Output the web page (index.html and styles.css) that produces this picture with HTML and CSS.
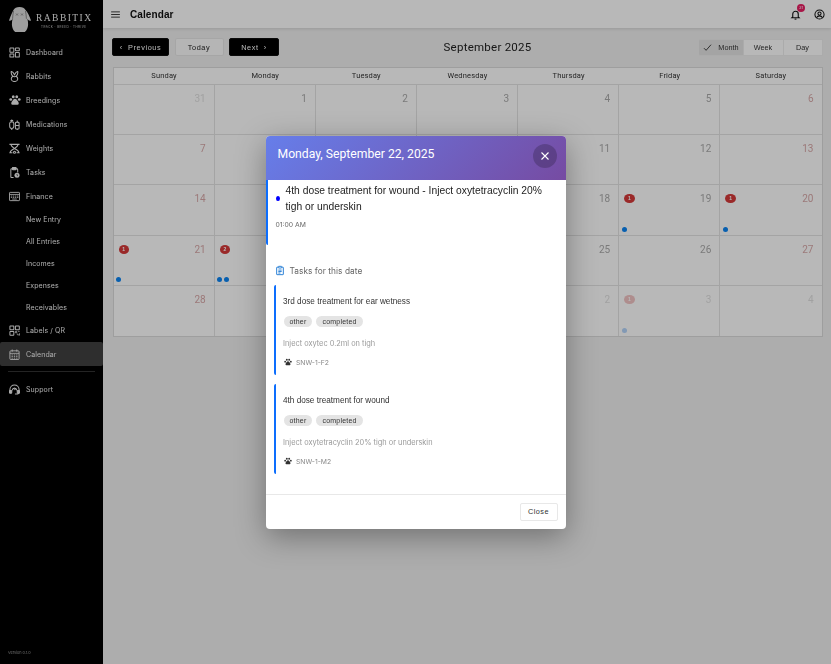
FILE: index.html
```html
<!DOCTYPE html>
<html lang="en">
<head>
<meta charset="utf-8">
<title>Calendar</title>
<link rel="stylesheet" href="styles.css">
</head>
<body>
<svg class="defs" width="0" height="0" aria-hidden="true">
  <defs>
    <symbol id="paw" viewBox="0 0 24 24"><g fill="currentColor"><ellipse cx="3.500" cy="11" rx="2.800" ry="2.600"/><ellipse cx="8.500" cy="5.500" rx="2.800" ry="3"/><ellipse cx="15.500" cy="5.500" rx="2.800" ry="3"/><ellipse cx="20.500" cy="11" rx="2.800" ry="2.600"/><path d="M12 9.500c-3 0-4.500 3-6.500 6C4 18 4 21.500 7 21.500h10c3 0 3-3.500 1.500-6-2-3-3.500-6-6.500-6z"/></g></symbol>
  </defs>
</svg>
<div class="app">
  <aside class="sidebar">
    <div class="logo">
      <svg class="logo-mark" viewBox="0 0 23 26"><path fill="#dcdcdc" d="M11.500 0c3 0 5 1.200 6 3 2 2 4 6 5.500 10.500-1.300.8-2.700-.2-3.600-1.700.5 2 .8 4 .7 6-.2 3.200-1.400 5.800-3.300 7.200H7.200C5.300 23.600 4.100 21 3.900 17.800c-.1-2 .2-4 .7-6C3.700 13.300 2.300 14.300 1 13.500 2.500 9 4.500 5 5.500 3 6.500 1.200 8.500 0 11.500 0z"/><path d="M8 6.500l2 2M10 6.500l-2 2M13 6.500l2 2M15 6.500l-2 2" stroke="#666" stroke-width=".6"/><path d="M5.500 4C5 7 4.700 9 4.600 11.800M17.500 4c.5 3 .8 5 .9 7.800" stroke="#333" stroke-width=".5" fill="none"/></svg>
      <div class="logo-text">
        <div class="logo-name">RABBITIX</div>
        <div class="logo-sub">TRACK · BREED · THRIVE</div>
      </div>
    </div>
    <nav class="nav">
      <a class="nav-item"><svg class="nav-icon" viewBox="0 0 24 24" fill="none" stroke="currentColor" stroke-width="2.200"><rect x="2" y="2" width="8.500" height="9.500" rx="1"/><rect x="14" y="2" width="8.500" height="6" rx="1"/><rect x="2" y="15.500" width="8.500" height="6.500" rx="1"/><rect x="14" y="12" width="8.500" height="10" rx="1"/></svg><span>Dashboard</span></a>
      <a class="nav-item"><svg class="nav-icon" viewBox="0 0 24 24" fill="none" stroke="currentColor" stroke-width="2.200"><path d="M5 1c3 .5 5.500 4 7 7 1.500-3 4-6.500 7-7 .8 4-.7 8-3.500 10.500 2.500 1.500 3.800 4 3.500 6.500-.4 3-3.500 5-7 5s-6.600-2-7-5c-.3-2.500 1-5 3.500-6.500C5.700 9 4.200 5 5 1z"/><path d="M8.500 11.500c2 1 5 1 7 0"/></svg><span>Rabbits</span></a>
      <a class="nav-item"><svg class="nav-icon paw-big" viewBox="0 0 24 24"><use href="#paw"/></svg><span>Breedings</span></a>
      <a class="nav-item"><svg class="nav-icon" viewBox="0 0 24 24" fill="none" stroke="currentColor" stroke-width="2.200"><path d="M6 1v5M3 3.500h6M3 6.500h6l1.500 3v6.500a4.500 4.500 0 0 1-9 0V9.500zM6 20.500V24"/><rect x="14" y="7" width="8" height="15" rx="2"/><path d="M18 3v4M18 22v2M14 14h8"/></svg><span>Medications</span></a>
      <a class="nav-item"><svg class="nav-icon" viewBox="0 0 24 24" fill="none" stroke="currentColor" stroke-width="2.200"><path d="M1 3h22M4 3c.5 4 4 6 8 9 4-3 7.500-5 8-9" /><path d="M12 12c-4 2-9 4-10 9.500h5.500M12 12c4 2 9 4 10 9.500h-5.500"/><circle cx="12" cy="20" r="2.200"/></svg><span>Weights</span></a>
      <a class="nav-item"><svg class="nav-icon" viewBox="0 0 24 24" fill="none" stroke="currentColor" stroke-width="2.200"><path d="M10 23H6a2 2 0 0 1-2-2V6a2 2 0 0 1 2-2h11a2 2 0 0 1 2 2v6"/><rect x="7.500" y="1" width="8" height="5" rx="1" fill="currentColor"/><circle cx="17.500" cy="18" r="5.500" fill="currentColor" stroke="none"/><path d="M17.500 15v3.200l2 1.300" stroke="#000" stroke-width="1.400"/></svg><span>Tasks</span></a>
      <a class="nav-item"><svg class="nav-icon" viewBox="0 0 24 24" fill="none" stroke="currentColor" stroke-width="2"><rect x="1" y="3" width="22" height="18" rx="1.500"/><path d="M1 7.500h22M4 11h3M8.500 11h3M13 11h3M17.500 11h3M4 14h3M8.500 14h3M13 14h3M17.500 14h3M7 17.500h10" stroke-width="1.800"/></svg><span>Finance</span></a>
      <a class="nav-sub">New Entry</a>
      <a class="nav-sub">All Entries</a>
      <a class="nav-sub">Incomes</a>
      <a class="nav-sub">Expenses</a>
      <a class="nav-sub">Receivables</a>
      <a class="nav-item"><svg class="nav-icon" viewBox="0 0 24 24" fill="none" stroke="currentColor" stroke-width="2.200"><rect x="2" y="2" width="8.500" height="8.500" rx="1"/><rect x="14" y="2" width="8.500" height="8.500" rx="1"/><rect x="2" y="14" width="8.500" height="8.500" rx="1"/><path d="M14 14h3v3h-3zM20 14h3M17 20h3v3M23 18v5" stroke-width="1.700"/></svg><span>Labels / QR</span></a>
      <a class="nav-item active"><svg class="nav-icon" viewBox="0 0 24 24" fill="none" stroke="currentColor" stroke-width="2"><rect x="2" y="4" width="20" height="19" rx="2"/><path d="M2 9.500h20M7 1v5M17 1v5M5.500 13h3M10.500 13h3M15.500 13h3M5.500 16.500h3M10.500 16.500h3M15.500 16.500h3M5.500 20h3M10.500 20h3M15.500 20h3" stroke-width="1.800"/></svg><span>Calendar</span></a>
      <div class="nav-divider"></div>
      <a class="nav-item"><svg class="nav-icon" viewBox="0 0 24 24" fill="none" stroke="currentColor" stroke-width="2.200"><path d="M2 17v-5a10 10 0 0 1 20 0v5"/><path d="M7 14c.5-3 2.500-5 5-5s4.500 2 5 5M12 13l1.500-2M22 18c0 2.500-2.500 4-6 4h-3"/><rect x="1" y="14" width="5" height="6" rx="1.500" fill="currentColor"/><rect x="18" y="14" width="5" height="6" rx="1.500" fill="currentColor"/></svg><span>Support</span></a>
    </nav>
    <div class="version">Version 0.1.0</div>
  </aside>
  <main class="main">
    <header class="topbar">
      <svg class="hamburger" viewBox="0 0 10 8"><path d="M0 1h10M0 4h10M0 7h10" stroke="#222" stroke-width="1"/></svg>
      <h1 class="page-title">Calendar</h1>
      <div class="top-actions">
        <span class="bell">
          <svg class="top-icon" viewBox="0 0 24 24" fill="none" stroke="#111" stroke-width="2.400"><path d="M6 17V11a6 6 0 0 1 12 0v6l2 2H4z"/><path d="M10 22h4" stroke-width="2.400"/></svg>
          <span class="bell-badge">31</span>
        </span>
        <svg class="top-icon" viewBox="0 0 24 24" fill="none" stroke="#111" stroke-width="2.200"><circle cx="12" cy="12" r="10"/><circle cx="12" cy="10" r="3.500"/><path d="M5.500 19c1.500-3 4-4 6.500-4s5 1 6.500 4"/></svg>
      </div>
    </header>
    <section class="content">
      <div class="toolbar">
        <div class="nav-buttons">
          <button class="btn btn-dark btn-prev">‹&nbsp; Previous</button>
          <button class="btn btn-light">Today</button>
          <button class="btn btn-dark btn-next">Next &nbsp;›</button>
        </div>
        <h2 class="month-title">September 2025</h2>
        <div class="view-group">
          <button class="view view-active"><svg class="check" viewBox="0 0 12 10"><path d="M1 6l3 3 7-8" fill="none" stroke="#222" stroke-width="1.200"/></svg>Month</button>
          <button class="view">Week</button>
          <button class="view view-last">Day</button>
        </div>
      </div>
      <div class="calendar">
        <div class="weekdays">
          <div>Sunday</div><div>Monday</div><div>Tuesday</div><div>Wednesday</div><div>Thursday</div><div>Friday</div><div>Saturday</div>
        </div>
        <div class="days">
          <div class="day other">31</div><div class="day">1</div><div class="day">2</div><div class="day">3</div><div class="day">4</div><div class="day">5</div><div class="day weekend">6</div>
          <div class="day weekend">7</div><div class="day">8</div><div class="day">9</div><div class="day">10</div><div class="day">11</div><div class="day">12</div><div class="day weekend">13</div>
          <div class="day weekend">14</div><div class="day">15</div><div class="day">16</div><div class="day">17</div><div class="day">18</div>
          <div class="day"><span class="badge">1</span>19<div class="dots"><i></i></div></div>
          <div class="day weekend"><span class="badge">1</span>20<div class="dots"><i></i></div></div>
          <div class="day weekend"><span class="badge">1</span>21<div class="dots"><i></i></div></div>
          <div class="day"><span class="badge">2</span>22<div class="dots"><i></i><i></i></div></div>
          <div class="day">23</div><div class="day">24</div><div class="day">25</div><div class="day">26</div><div class="day weekend">27</div>
          <div class="day weekend">28</div><div class="day">29</div><div class="day">30</div><div class="day other">1</div><div class="day other">2</div>
          <div class="day other"><span class="badge">1</span>3<div class="dots"><i></i></div></div>
          <div class="day other">4</div>
        </div>
      </div>
    </section>
  </main>
</div>
<div class="backdrop">
  <div class="modal">
    <div class="modal-head">
      <div class="modal-title">Monday, September 22, 2025</div>
      <button class="modal-x" aria-label="Close"><svg viewBox="0 0 10 10"><path d="M1.500 1.500l7 7M8.500 1.500l-7 7" stroke="#fff" stroke-width="1.100"/></svg></button>
    </div>
    <div class="modal-body">
      <div class="event">
        <div class="event-row"><span class="event-dot"></span><span class="event-text">4th dose treatment for wound - Inject oxytetracyclin 20% tigh or underskin</span></div>
        <div class="event-time">01:00 AM</div>
      </div>
      <div class="tasks-head">
        <svg class="tasks-icon" viewBox="0 0 24 24" fill="none" stroke="#1976d2" stroke-width="2.200"><path d="M8 4H5a1 1 0 0 0-1 1v16a1 1 0 0 0 1 1h14a1 1 0 0 0 1-1V5a1 1 0 0 0-1-1h-3"/><rect x="8" y="2" width="8" height="4" rx="1"/><path d="M8 11h8M8 14.500h8M8 18h5"/></svg>
        <span>Tasks for this date</span>
      </div>
      <div class="task">
        <div class="task-title">3rd dose treatment for ear wetness</div>
        <div class="chips"><span class="chip">other</span><span class="chip">completed</span></div>
        <div class="task-desc">Inject oxytec 0.2ml on tigh</div>
        <div class="task-id"><svg class="paw-small" viewBox="0 0 24 24"><use href="#paw"/></svg>SNW-1-F2</div>
      </div>
      <div class="task">
        <div class="task-title">4th dose treatment for wound</div>
        <div class="chips"><span class="chip">other</span><span class="chip">completed</span></div>
        <div class="task-desc">Inject oxytetracyclin 20% tigh or underskin</div>
        <div class="task-id"><svg class="paw-small" viewBox="0 0 24 24"><use href="#paw"/></svg>SNW-1-M2</div>
      </div>
    </div>
    <div class="modal-foot"><button class="btn-close">Close</button></div>
  </div>
</div>
</body>
</html>
```
FILE: styles.css
```css
* { box-sizing: border-box; }
html, body { margin: 0; height: 100%; overflow: hidden; }
body { font-family: "Inter", "Liberation Sans", sans-serif; background: #f0f0f0; color: #222; }
.defs { position: absolute; }
.app { display: flex; height: 664px; filter: blur(.35px); }

.sidebar { width: 103px; flex: none; background: #000; color: #eee; display: flex; flex-direction: column; position: relative; }
.logo { height: 40px; display: flex; align-items: flex-start; padding: 7px 0 0 8px; gap: 5px; }
.logo-mark { width: 23px; height: 26px; flex: none; }
.logo-text { padding-top: 6px; }
.logo-name { font-family: "Liberation Serif", serif; font-size: 9.500px; letter-spacing: 1.450px; line-height: 11px; color: #eee; white-space: nowrap; }
.logo-sub { font-size: 3px; letter-spacing: .45px; color: #ccc; line-height: 6px; white-space: nowrap; padding-left: 5px; }
.nav { display: flex; flex-direction: column; }
.nav-item { height: 24px; display: flex; align-items: center; padding-left: 9px; gap: 6px; font-size: 7px; color: #eee; letter-spacing: .1px; }
.nav-icon { width: 11px; height: 11px; flex: none; color: #eee; }
.paw-big { width: 12px; height: 12px; margin: 0 -.5px; }
.nav-sub { height: 22px; display: flex; align-items: center; padding-left: 26px; font-size: 7px; color: #eee; letter-spacing: .1px; }
.nav-sub:last-of-type { margin-bottom: 1px; }
.active { background: #404040; border-radius: 2px; }
.nav-divider { height: 1px; background: #333; margin: 5px 8px 5px; }
.version { position: absolute; left: 8px; bottom: 9px; font-size: 3.800px; color: #999; }

.main { flex: 1; min-width: 0; display: flex; flex-direction: column; }
.topbar { height: 28px; flex: none; background: #fff; display: flex; align-items: center; padding: 1px 6px 0 7.500px; box-shadow: 0 1px 3px rgba(0,0,0,.12); }
.hamburger { width: 9px; height: 7px; flex: none; }
.page-title { margin: 0 0 0 10.500px; font-size: 10px; font-weight: 700; color: #111; font-family: "Liberation Sans", sans-serif; letter-spacing: .1px; }
.top-actions { margin-left: auto; display: flex; align-items: center; gap: 13px; }
.top-icon { width: 11px; height: 11px; display: block; }
.bell { position: relative; display: block; }
.bell-badge { position: absolute; left: 7px; top: -5px; width: 8px; height: 8px; border-radius: 50%; background: #e91e63; color: #fff; font-size: 4px; line-height: 8px; text-align: center; }

.content { flex: 1; padding: 10px 8.500px 0 9.500px; }
.toolbar { display: grid; grid-template-columns: 1fr auto 1fr; align-items: center; height: 18px; margin-bottom: 11px; }
.nav-buttons { display: flex; gap: 5.500px; margin-left: -.5px; }
.btn { height: 18px; border-radius: 2px; font-family: "Liberation Sans", sans-serif; font-size: 7.300px; letter-spacing: .6px; padding: 0; font-weight: 400; }
.btn-dark { background: #000; color: #fff; border: 1px solid #111; }
.btn-prev { width: 57px; }
.btn-next { width: 50px; }
.btn-light { background: #fbfbfb; border: 1px solid #e6e6e6; color: #222; width: 49px; }
.month-title { margin: 0; font-size: 11.500px; font-weight: 400; color: #222; letter-spacing: .25px; font-family: "Roboto", sans-serif; position: relative; left: 20px; }
.view-group { display: flex; justify-self: end; height: 17px; }
.view { height: 17px; width: 40px; border: 1px solid #eee; border-left: 0; background: #fff; font-family: "Liberation Sans", sans-serif; font-size: 7.300px; color: #333; padding: 0; display: flex; align-items: center; justify-content: center; }
.view-last { width: 39px; }
.view-active { width: 45px; background: #e4e4e4; border-left: 1px solid #e4e4e4; border-radius: 2px 0 0 2px; gap: 6px; }
.check { width: 9px; height: 7px; }

.calendar { border: 1px solid #dcdcdc; background: #fff; width: 710px; }
.weekdays { display: grid; grid-template-columns: repeat(7, 1fr); height: 16.500px; border-bottom: 1px solid #e4e4e4; }
.weekdays > div { text-align: center; font-size: 7.500px; line-height: 16px; color: #333; font-family: "Roboto", sans-serif; letter-spacing: .15px; }
.days { display: grid; grid-template-columns: repeat(7, 1fr); grid-auto-rows: 50.400px; }
.day { position: relative; border-right: 1px solid #e4e4e4; border-bottom: 1px solid #e4e4e4; padding: 7px 8px 0 0; text-align: right; font-size: 10px; line-height: 13px; color: #aaa; font-family: "Roboto", sans-serif; }
.day:nth-child(7n) { border-right: 0; }
.day:nth-last-child(-n+7) { border-bottom: 0; }
.weekend { color: #d8a8a8; }
.other { color: #e0e0e0; }
.badge { position: absolute; left: 5px; top: 9px; width: 10.500px; height: 9px; border-radius: 50%; background: #d63a3a; color: #fff; font-size: 5px; line-height: 9px; text-align: center; font-weight: 700; font-family: "Liberation Sans", sans-serif; }
.dots { position: absolute; left: 2.500px; bottom: 3px; display: flex; gap: 2px; }
.dots i { display: block; width: 5px; height: 5px; border-radius: 50%; background: #0b84f3; }
.other .badge { background: #f2c4c4; }
.other .dots i { background: #b4d4fa; }

.backdrop { position: fixed; inset: 0; background: rgba(0,0,0,.28); display: flex; align-items: center; justify-content: center; }
.modal { width: 300px; height: 393px; background: #fff; border-radius: 4px; display: flex; flex-direction: column; overflow: hidden; box-shadow: 0 8px 30px rgba(0,0,0,.35); filter: blur(.3px); }
.modal-head { height: 44px; flex: none; background: linear-gradient(135deg, #667eea, #764ba2); display: flex; align-items: flex-start; justify-content: space-between; padding: 8px 8.500px 0 12px; }
.modal-title { color: #fff; font-size: 12.200px; line-height: 20px; font-family: "Roboto", sans-serif; }
.modal-x { width: 24px; height: 24px; border-radius: 50%; border: 0; padding: 7px; background: rgba(0,0,0,.2); }
.modal-x svg { display: block; width: 10px; height: 10px; }
.modal-body { flex: 1; min-height: 0; overflow: hidden; }
.event { border-left: 2px solid #0d6efd; height: 65px; padding: 3px 8px 0 8px; border-radius: 0 0 0 2px; }
.event-row { display: flex; align-items: center; gap: 6px; }
.event-dot { width: 4px; height: 5.500px; border-radius: 50%; background: #00f; flex: none; }
.event-text { font-family: "Liberation Sans", sans-serif; font-size: 10.300px; line-height: 16px; color: #222; }
.event-time { font-size: 6.800px; color: #666; margin-top: 5px; line-height: 9px; }
.tasks-head { display: flex; align-items: center; gap: 5px; margin: 20px 0 8px 9px; height: 12px; font-size: 8.300px; color: #666; letter-spacing: .05px; }
.tasks-icon { width: 10px; height: 11px; flex: none; }
.task { margin: 0 0 9px 8px; width: 284px; height: 90px; border-left: 2px solid #0d6efd; border-radius: 2px; padding: 11.500px 0 0 7.500px; }
.task-title { font-family: "Liberation Sans", sans-serif; font-size: 8.200px; line-height: 12px; color: #333; }
.chips { display: flex; gap: 4px; margin-top: 7.500px; padding-left: .5px; }
.chip { height: 11.500px; border-radius: 6px; background: #e4e4e4; font-family: "Liberation Sans", sans-serif; font-size: 7px; line-height: 11.500px; padding: 0 6px; color: #333; letter-spacing: .2px; }
.task-desc { font-size: 7.400px; color: #999; margin-top: 10.500px; line-height: 11px; }
.task-id { display: flex; align-items: center; font-size: 6.800px; color: #888; margin-top: 8px; line-height: 11px; padding-left: 1px; gap: 4px; }
.paw-small { width: 8px; height: 8px; color: #333; }
.modal-foot { height: 35px; flex: none; border-top: 1px solid #e8e8e8; display: flex; align-items: center; justify-content: flex-end; padding-right: 8px; }
.btn-close { width: 38px; height: 18px; background: #fff; border: 1px solid #e8e8e8; border-radius: 2px; font-family: "Liberation Sans", sans-serif; font-size: 7.300px; letter-spacing: .5px; color: #333; padding: 0; }
```
